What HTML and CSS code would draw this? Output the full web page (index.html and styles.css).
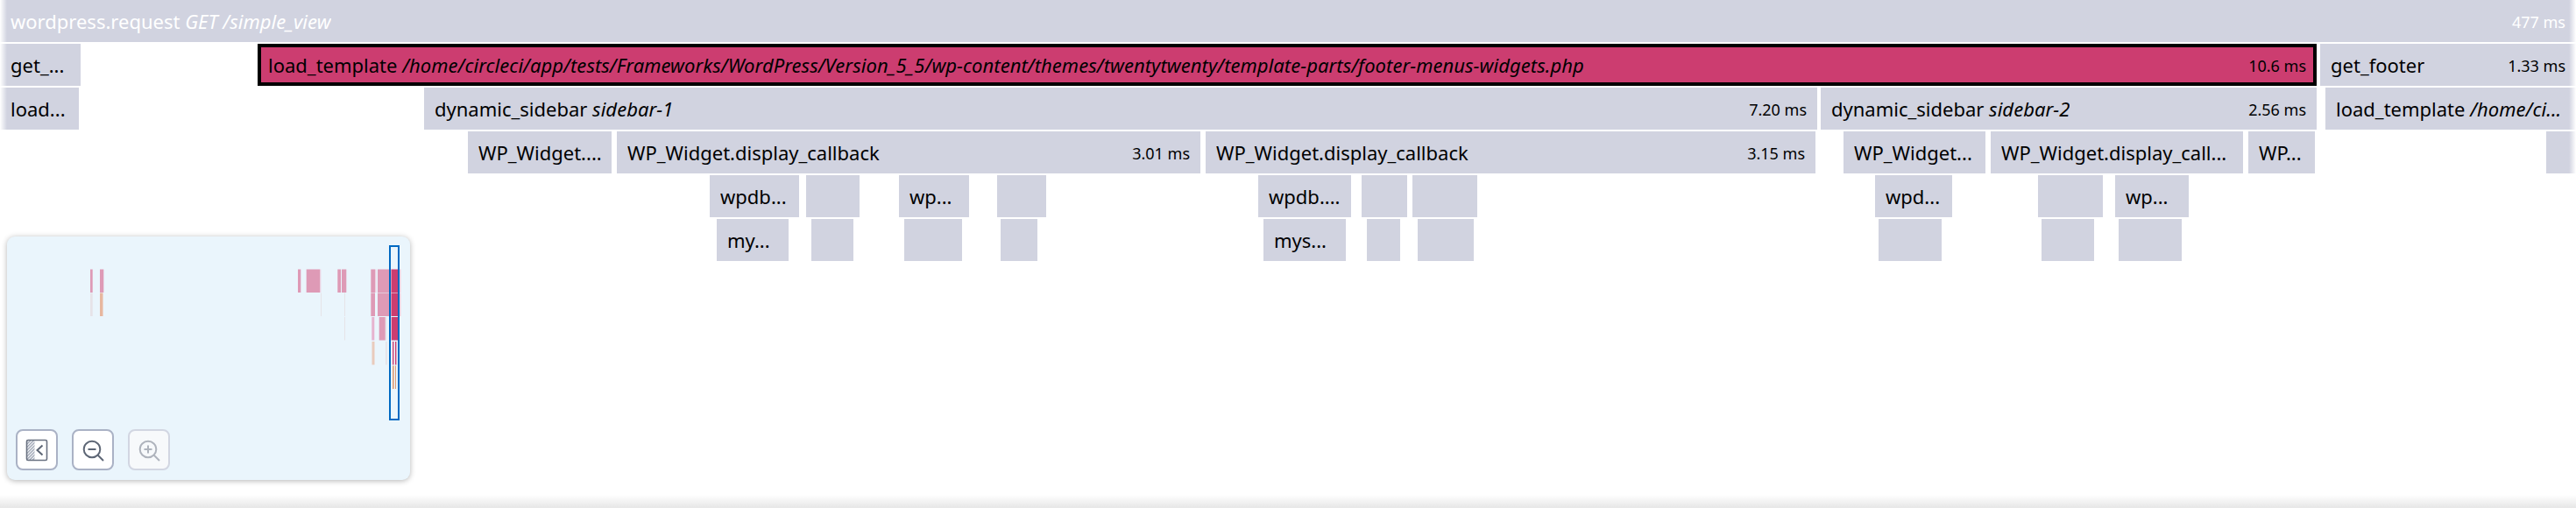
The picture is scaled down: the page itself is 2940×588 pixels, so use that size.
FILE: index.html
```html
<!DOCTYPE html>
<html>
<head>
    <title>Flame graph</title>
    <link rel="stylesheet" href="styles.css">
</head>
<body>
    <div id="flame">
        <div class="row">
            <div class="span root" style="left: 0; width: 2940px;"><span class="name">wordpress.request <em>GET /simple_view</em></span><span class="time">477 ms</span></div>
        </div>
        <div class="row">
            <div class="span" style="left: 0; width: 92px;"><span class="name">get_...</span></div>
            <div class="span selected" style="left: 294px; width: 2350px;"><span class="name">load_template <em>/home/circleci/app/tests/Frameworks/WordPress/Version_5_5/wp-content/themes/twentytwenty/template-parts/footer-menus-widgets.php</em></span><span class="time">10.6 ms</span></div>
            <div class="span" style="left: 2648px; width: 292px;"><span class="name">get_footer</span><span class="time">1.33 ms</span></div>
        </div>
        <div class="row">
            <div class="span" style="left: 0; width: 90px;"><span class="name">load...</span></div>
            <div class="span" style="left: 484px; width: 1590px;"><span class="name">dynamic_sidebar <em>sidebar-1</em></span><span class="time">7.20 ms</span></div>
            <div class="span" style="left: 2078px; width: 566px;"><span class="name">dynamic_sidebar <em>sidebar-2</em></span><span class="time">2.56 ms</span></div>
            <div class="span" style="left: 2654px; width: 286px;"><span class="name">load_template <em>/home/ci...</em></span></div>
        </div>
        <div class="row">
            <div class="span" style="left: 534px; width: 164px;"><span class="name">WP_Widget....</span></div>
            <div class="span" style="left: 704px; width: 666px;"><span class="name">WP_Widget.display_callback</span><span class="time">3.01 ms</span></div>
            <div class="span" style="left: 1376px; width: 696px;"><span class="name">WP_Widget.display_callback</span><span class="time">3.15 ms</span></div>
            <div class="span" style="left: 2104px; width: 162px;"><span class="name">WP_Widget...</span></div>
            <div class="span" style="left: 2272px; width: 288px;"><span class="name">WP_Widget.display_call...</span></div>
            <div class="span" style="left: 2566px; width: 76px;"><span class="name">WP...</span></div>
            <div class="span" style="left: 2906px; width: 34px;"></div>
        </div>
        <div class="row">
            <div class="span" style="left: 810px; width: 102px;"><span class="name">wpdb...</span></div>
            <div class="span" style="left: 920px; width: 61px;"></div>
            <div class="span" style="left: 1026px; width: 80px;"><span class="name">wp...</span></div>
            <div class="span" style="left: 1138px; width: 56px;"></div>
            <div class="span" style="left: 1436px; width: 106px;"><span class="name">wpdb....</span></div>
            <div class="span" style="left: 1554px; width: 52px;"></div>
            <div class="span" style="left: 1612px; width: 74px;"></div>
            <div class="span" style="left: 2140px; width: 88px;"><span class="name">wpd...</span></div>
            <div class="span" style="left: 2326px; width: 74px;"></div>
            <div class="span" style="left: 2414px; width: 84px;"><span class="name">wp...</span></div>
        </div>
        <div class="row">
            <div class="span" style="left: 818px; width: 82px;"><span class="name">my...</span></div>
            <div class="span" style="left: 926px; width: 48px;"></div>
            <div class="span" style="left: 1032px; width: 66px;"></div>
            <div class="span" style="left: 1142px; width: 42px;"></div>
            <div class="span" style="left: 1442px; width: 94px;"><span class="name">mys...</span></div>
            <div class="span" style="left: 1560px; width: 38px;"></div>
            <div class="span" style="left: 1618px; width: 64px;"></div>
            <div class="span" style="left: 2144px; width: 72px;"></div>
            <div class="span" style="left: 2330px; width: 60px;"></div>
            <div class="span" style="left: 2418px; width: 72px;"></div>
        </div>

        <div id="minimap">
            <svg class="overview" width="460" height="278" viewBox="0 0 460 278">
                <defs>
                    <pattern id="hatch" width="2.500" height="2.500" patternUnits="userSpaceOnUse" patternTransform="rotate(45)">
                        <rect width="2.500" height="2.500" fill="#eef0f3"></rect>
                        <rect width="1" height="2.500" fill="#8c95a6"></rect>
                    </pattern>
                </defs>
                <g fill="#de9ab6">
                    <rect x="95" y="37.500" width="2.700" height="26.500"></rect>
                    <rect x="106" y="37.500" width="4.300" height="26.500"></rect>
                    <rect x="332" y="37.500" width="3.300" height="26.500"></rect>
                    <rect x="341.700" y="37.500" width="15.300" height="26.500"></rect>
                    <rect x="377.300" y="37.500" width="3.700" height="26.500"></rect>
                    <rect x="382" y="37.500" width="5.300" height="26.500"></rect>
                    <rect x="415.300" y="37.500" width="4.700" height="26.500"></rect>
                    <rect x="423" y="37.500" width="15.700" height="26.500"></rect>
                    <rect x="415.300" y="64.500" width="4.700" height="26.500"></rect>
                    <rect x="423" y="64.500" width="15.700" height="26.500"></rect>
                    <rect x="424.700" y="92" width="7" height="26.500"></rect>
                </g>
                <g fill="#ecd0e0">
                    <rect x="357" y="37.500" width="1.300" height="26.500"></rect>
                    <rect x="420" y="37.500" width="1.500" height="26.500"></rect>
                    <rect x="446.700" y="37.500" width="2.800" height="26.500"></rect>
                    <rect x="446.700" y="64.500" width="2.800" height="26.500"></rect>
                </g>
                <rect x="416.300" y="92" width="3" height="26.500" fill="#e6b3cf"></rect>
                <g fill="#e6e3e8">
                    <rect x="95" y="64.500" width="2.700" height="26.500"></rect>
                    <rect x="358" y="64.500" width="1" height="26.500"></rect>
                    <rect x="385" y="64.500" width="1" height="26.500"></rect>
                    <rect x="385" y="92" width="1" height="26.500"></rect>
                    <rect x="432" y="92" width="1.300" height="26.500"></rect>
                    <rect x="432" y="120" width="1.700" height="26.500"></rect>
                </g>
                <g fill="#e7b79f">
                    <rect x="106" y="64.500" width="3.500" height="26.500"></rect>
                </g>
                <rect x="416.500" y="120" width="3" height="26.500" fill="#e9cbbc"></rect>
                <g fill="#cc3d70">
                    <rect x="438.700" y="37.500" width="8" height="26.500"></rect>
                    <rect x="438.700" y="64.500" width="8" height="26.500"></rect>
                    <rect x="438.700" y="92" width="7.600" height="26.500"></rect>
                    <rect x="440" y="120" width="1.400" height="26.500"></rect>
                    <rect x="443" y="120" width="1.400" height="26.500"></rect>
                </g>
                <g fill="#dd9c74">
                    <rect x="440" y="147.500" width="1.600" height="26.500"></rect>
                    <rect x="443" y="147.500" width="1" height="26.500"></rect>
                </g>
                <rect class="viewport" x="437" y="11" width="10" height="198"></rect>
            </svg>
            <div class="buttons">
                <button class="map-btn" title="Hide">
                    <svg width="26" height="26" viewBox="0 0 26 26">
                        <rect x="1.500" y="1.500" width="9" height="23" fill="url(#hatch)"></rect>
                        <rect x="1.500" y="1.500" width="23" height="23" rx="1.500" fill="none" stroke="#697180" stroke-width="1.600"></rect>
                        <path d="M19.500 7.500 L13.500 13 L19.500 18.500" fill="none" stroke="#5d6675" stroke-width="2"></path>
                    </svg>
                </button>
                <button class="map-btn" title="Zoom out">
                    <svg width="26" height="26" viewBox="0 0 26 26">
                        <circle cx="12" cy="12" r="9.300" fill="none" stroke="#5d6675" stroke-width="2"></circle>
                        <path d="M7.500 12 H16.500" fill="none" stroke="#5d6675" stroke-width="2"></path>
                        <path d="M18.500 18.500 L25 25" fill="none" stroke="#5d6675" stroke-width="2"></path>
                    </svg>
                </button>
                <button class="map-btn disabled" title="Zoom in">
                    <svg width="26" height="26" viewBox="0 0 26 26">
                        <circle cx="12" cy="12" r="9.300" fill="none" stroke="#aeb3bc" stroke-width="2"></circle>
                        <path d="M7.500 12 H16.500 M12 7.500 V16.500" fill="none" stroke="#aeb3bc" stroke-width="2"></path>
                        <path d="M18.500 18.500 L25 25" fill="none" stroke="#aeb3bc" stroke-width="2"></path>
                    </svg>
                </button>
            </div>
        </div>
    </div>
</body>
</html>
```
FILE: styles.css
```css
html, body { margin: 0; padding: 0; background: white; overflow: hidden; }
body { font-family: "Noto Sans", "Open Sans", sans-serif; color: #000; }

#flame { position: relative; height: 580px; display: flex; flex-direction: column; gap: 2px; background: linear-gradient(to bottom, #fff 565px, #e6e6e6 580px); }
/* fade on both sides of the graph */
#flame::before, #flame::after { content: ""; position: absolute; top: 0; width: 8px; height: 298px; z-index: 1; }
#flame::before { left: 0; background: linear-gradient(to right, white, rgba(255,255,255,0)); }
#flame::after { right: 0; background: linear-gradient(to left, white, rgba(255,255,255,0)); }
.row { position: relative; height: 48px; flex: none; }

.span { position: absolute; top: 0; height: 48px; box-sizing: border-box; padding: 0 12px; display: flex; justify-content: space-between; align-items: center; background: #d1d3e0; font-size: 22px; white-space: nowrap; overflow: hidden; }
.span .name { overflow: hidden; }
.span em { letter-spacing: 0.05px; }
.span .time { font-size: 18px; flex: none; margin-left: 12px; padding-top: 2px; }
.span.root { color: white; }
.span.selected { background: #cc3d70; border: 4px solid black; padding: 0 8px; }

#minimap { position: absolute; left: 8px; top: 270px; width: 460px; height: 278px; box-sizing: border-box; background: #eaf5fc; border-radius: 9px; box-shadow: 0 1px 6px rgba(0,0,0,0.3); display: flex; flex-direction: column; justify-content: flex-end; padding: 0 10px 11px; z-index: 2; }
.overview { position: absolute; left: 0; top: 0; }
.viewport { fill: none; stroke: #0069c2; stroke-width: 2px; }

.buttons { display: flex; gap: 16px; position: relative; }
.map-btn { width: 48px; height: 47px; box-sizing: border-box; padding: 0; display: flex; align-items: center; justify-content: center; background: white; border: 2px solid #aab2c5; border-radius: 8px; }
.map-btn.disabled { background: #f7f9fb; border-color: #d2d6e2; }
```
